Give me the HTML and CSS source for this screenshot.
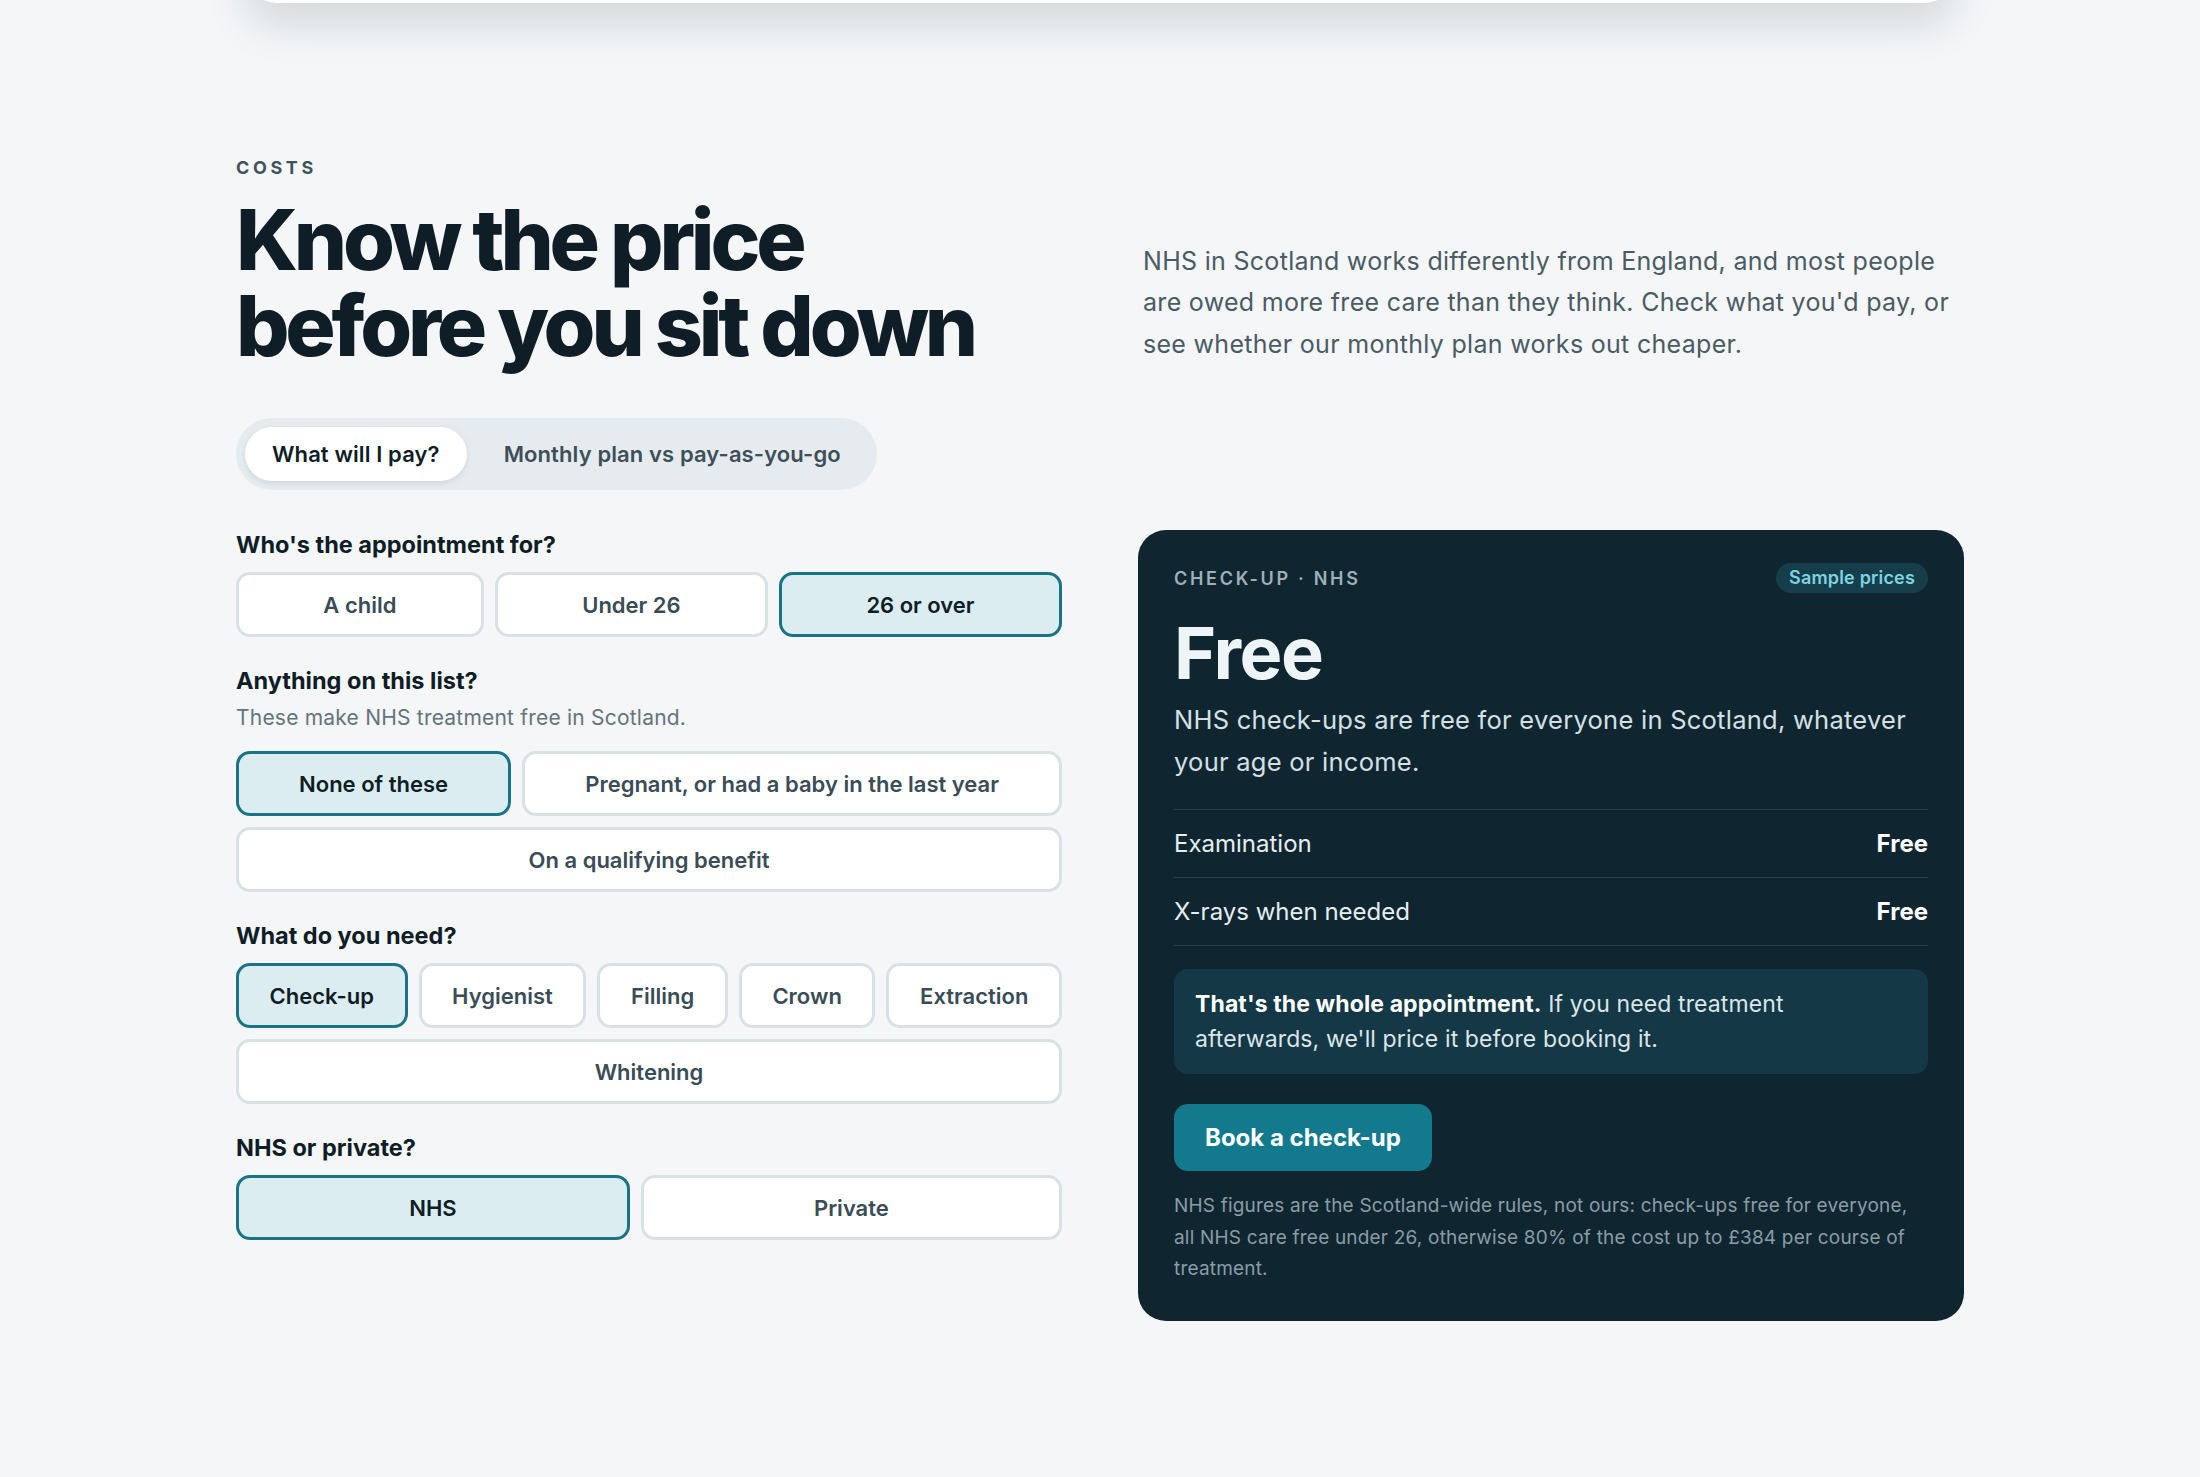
FILE: index.html
```html
<!DOCTYPE html>
<html lang="en">
<head>
    <meta charset="UTF-8">
    <meta name="viewport" content="width=device-width, initial-scale=1.0">
    <title>Costs</title>
    <link rel="stylesheet" href="styles.css">
</head>
<body>
    <div class="prev-card"></div>

    <section class="costs">
        <div class="costs-head">
            <div>
                <p class="eyebrow">Costs</p>
                <h2 class="title">Know the price<br>before you sit down</h2>
            </div>
            <p class="intro">NHS in Scotland works differently from England, and most people are owed more free care than they think. Check what you'd pay, or see whether our monthly plan works out cheaper.</p>
        </div>

        <div class="tabs">
            <button class="tab active">What will I pay?</button>
            <button class="tab">Monthly plan vs pay-as-you-go</button>
        </div>

        <div class="calc">
            <div class="form">
                <div class="field">
                    <div class="field-label">Who's the appointment for?</div>
                    <div class="options">
                        <button class="option">A child</button>
                        <button class="option">Under 26</button>
                        <button class="option selected">26 or over</button>
                    </div>
                </div>

                <div class="field">
                    <div class="field-label">Anything on this list?</div>
                    <div class="field-hint">These make NHS treatment free in Scotland.</div>
                    <div class="options">
                        <button class="option selected">None of these</button>
                        <button class="option">Pregnant, or had a baby in the last year</button>
                        <button class="option">On a qualifying benefit</button>
                    </div>
                </div>

                <div class="field">
                    <div class="field-label">What do you need?</div>
                    <div class="options">
                        <button class="option selected">Check-up</button>
                        <button class="option">Hygienist</button>
                        <button class="option">Filling</button>
                        <button class="option">Crown</button>
                        <button class="option">Extraction</button>
                        <button class="option">Whitening</button>
                    </div>
                </div>

                <div class="field">
                    <div class="field-label">NHS or private?</div>
                    <div class="options">
                        <button class="option selected">NHS</button>
                        <button class="option">Private</button>
                    </div>
                </div>
            </div>

            <aside class="quote">
                <div class="quote-head">
                    <span class="quote-tag">Check-up · NHS</span>
                    <span class="badge">Sample prices</span>
                </div>
                <p class="quote-price">Free</p>
                <p class="quote-desc">NHS check-ups are free for everyone in Scotland, whatever your age or income.</p>

                <div class="quote-lines">
                    <div class="quote-line"><span>Examination</span><b>Free</b></div>
                    <div class="quote-line"><span>X-rays when needed</span><b>Free</b></div>
                </div>

                <div class="quote-note">
                    <strong>That's the whole appointment.</strong> If you need treatment afterwards, we'll price it before booking it.
                </div>

                <button class="book">Book a check-up</button>

                <p class="quote-foot">NHS figures are the Scotland-wide rules, not ours: check-ups free for everyone, all NHS care free under 26, otherwise 80% of the cost up to £384 per course of treatment.</p>
            </aside>
        </div>
    </section>
</body>
</html>
```

FILE: styles.css
```css
:root {
    --bg-color: #f4f6f8;
    --ink: #0f1d26;
    --muted: #3a4c56;
    --teal: #1b7386;
    --card-bg: #0f2631;
    --card-line: #29434d;
}

body {
    margin: 0;
    background-color: var(--bg-color);
    font-family: Inter, "Noto Sans", sans-serif;
    color: var(--ink);
}

/* bottom of the previous section's card */
.prev-card {
    width: 1705px;
    height: 60px;
    margin: -57px auto 0;
    background: #fff;
    border-radius: 0 0 28px 28px;
    box-shadow: 0 18px 45px rgba(22, 45, 55, 0.16);
}

.costs {
    width: 1728px;
    margin: 154px auto 0;
    padding-bottom: 140px;
}

.costs-head {
    display: grid;
    grid-template-columns: 1fr 1fr;
    column-gap: 76px;
    align-items: end;
}

.eyebrow {
    margin: 0;
    font-size: 18px;
    line-height: 22px;
    font-weight: 700;
    letter-spacing: 0.2em;
    text-transform: uppercase;
    color: #3f535c;
}

.title {
    margin: 18px 0 0;
    font-size: 84px;
    line-height: 86px;
    font-weight: 800;
    letter-spacing: -0.05em;
    color: var(--ink);
}

.intro {
    margin: 0 0 4px;
    padding-left: 5px;
    font-size: 25px;
    line-height: 41.5px;
    letter-spacing: 0.012em;
    color: #4a5b64;
}

/* tab switch */
.tabs {
    display: inline-flex;
    gap: 10px;
    margin-top: 49px;
    padding: 9px;
    background: #e5ebee;
    border-radius: 999px;
}

.tab {
    font: 600 22px/54px Inter, sans-serif;
    letter-spacing: 0.005em;
    padding: 0 27px;
    border: none;
    background: none;
    border-radius: 999px;
    color: #3d4f58;
    cursor: pointer;
}

.tab.active {
    background: #fff;
    color: var(--ink);
    box-shadow: 0 2px 6px rgba(16, 38, 47, 0.1);
}

/* calculator */
.calc {
    display: grid;
    grid-template-columns: 1fr 1fr;
    column-gap: 76px;
    align-items: start;
    margin-top: 40px;
}

.field + .field {
    margin-top: 29px;
}

.field-label {
    font-size: 23.5px;
    line-height: 29px;
    font-weight: 700;
    margin-bottom: 13px;
}

.field-hint {
    font-size: 21px;
    line-height: 28px;
    letter-spacing: 0.01em;
    color: #64747c;
    margin: -4px 0 19px;
}

.options {
    display: flex;
    flex-wrap: wrap;
    gap: 11px;
}

.option {
    flex: 1 1 auto;
    height: 65px;
    padding: 0 26px;
    font: 600 22px Inter, sans-serif;
    background: #fff;
    border: 3px solid #d8e2e5;
    border-radius: 14px;
    color: var(--muted);
    cursor: pointer;
}

.option.selected {
    background: #dcedf1;
    border-color: var(--teal);
    color: var(--ink);
}

/* price card */
.quote {
    background: var(--card-bg);
    border-radius: 28px;
    padding: 33px 36px 36px;
    color: #e6eef0;
}

.quote-head {
    display: flex;
    justify-content: space-between;
    align-items: center;
    height: 30px;
}

.quote-tag {
    font-size: 18px;
    font-weight: 600;
    letter-spacing: 0.15em;
    text-transform: uppercase;
    color: #9fb0b7;
}

.badge {
    font-size: 18px;
    font-weight: 600;
    line-height: 30px;
    letter-spacing: 0.01em;
    padding: 0 13px;
    border-radius: 999px;
    background: #163e4a;
    color: #7fd3e1;
}

.quote-price {
    margin: 20px 0 0;
    font-size: 72px;
    line-height: 79px;
    font-weight: 700;
    letter-spacing: -0.02em;
    color: #eef5f6;
}

.quote-desc {
    margin: 7px 0 0;
    font-size: 25.5px;
    line-height: 42px;
    letter-spacing: 0.01em;
    color: #d4e0e4;
}

.quote-lines {
    margin-top: 26px;
    border-bottom: 1px solid var(--card-line);
}

.quote-line {
    display: flex;
    justify-content: space-between;
    padding: 17px 0;
    border-top: 1px solid var(--card-line);
    font-size: 24px;
    line-height: 33px;
}

.quote-line b {
    font-weight: 700;
    color: #fff;
}

.quote-note {
    margin-top: 23px;
    padding: 17.5px 60px 17.5px 21px;
    background: #143845;
    border-radius: 14px;
    font-size: 23px;
    line-height: 35px;
    letter-spacing: 0.005em;
    color: #dbe6e9;
}

.quote-note strong {
    color: #fff;
}

.book {
    display: block;
    margin-top: 30px;
    padding: 18.5px 31px;
    font: 700 24px/30px Inter, sans-serif;
    background: #137a8e;
    color: #fff;
    border: none;
    border-radius: 14px;
    cursor: pointer;
}

.quote-foot {
    margin: 19px 0 0;
    font-size: 19px;
    line-height: 31.5px;
    letter-spacing: 0.01em;
    color: #8a9da5;
}
```
